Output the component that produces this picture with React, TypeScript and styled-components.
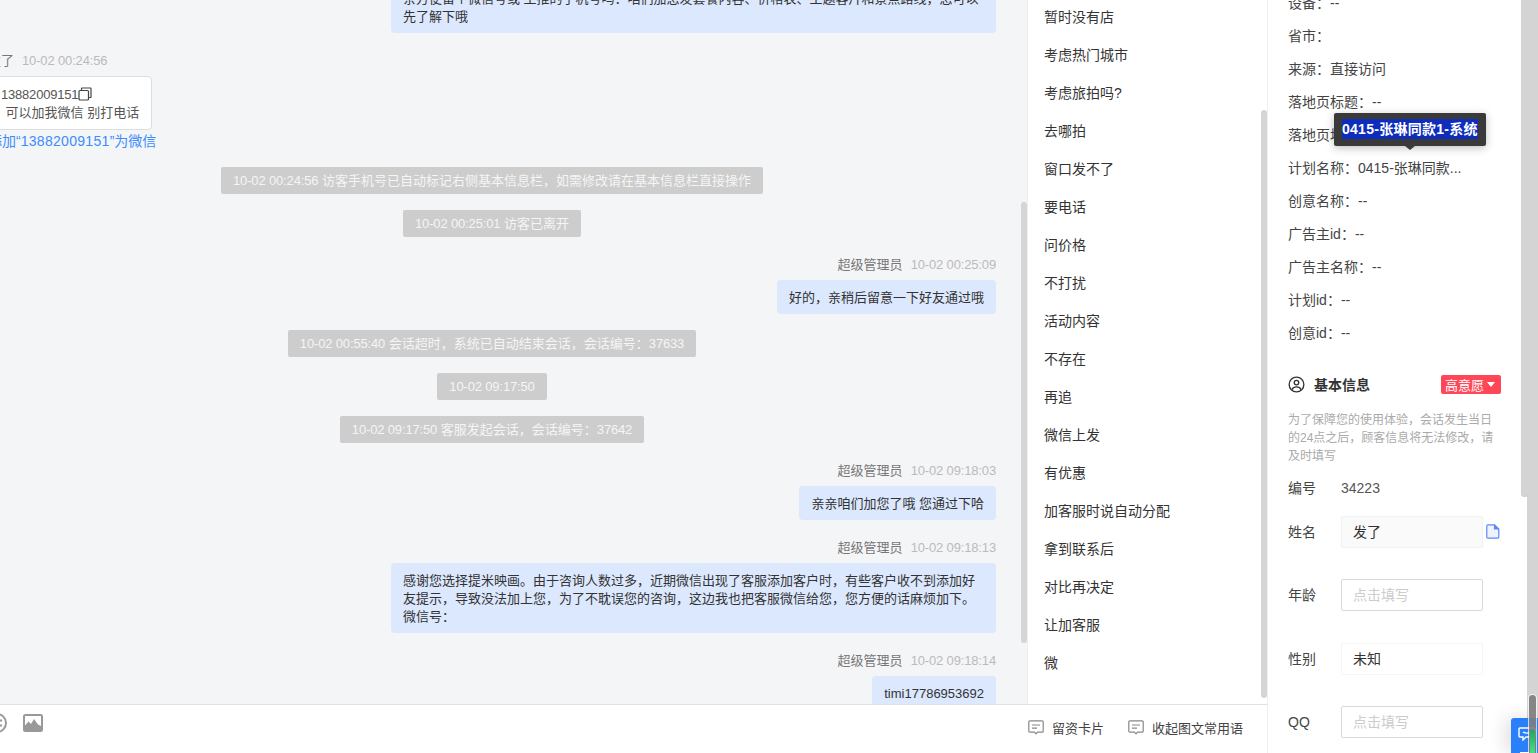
import styled, {createGlobalStyle} from 'styled-components'

const GlobalStyle = createGlobalStyle`
  html, body {
    margin: 0;
    height: 100%;
    overflow: hidden;
  }
  body {
    font-family: "Liberation Sans", "Noto Sans CJK SC", sans-serif;
    font-size: 13px;
    color: #333;
    background: #fff;
  }
`

const Page = styled.div`
  display: flex;
  width: 1538px;
  height: 753px;
  overflow: hidden;
  position: relative;
`

const Main = styled.div`
  width: 1268px;
  flex: none;
  display: flex;
  flex-direction: column;
`

const Workspace = styled.div`
  height: 704px;
  display: flex;
  flex: none;
`

const ChatPane = styled.div`
  position: relative;
  width: 1027px;
  flex: none;
  background: #f4f5f7;
  overflow: hidden;
`

const MessageList = styled.div`
  display: flex;
  flex-direction: column;
  align-items: flex-start;
  margin: -19px 0 0 -12px;
  padding-right: 31px;
  width: 1039px;
  box-sizing: border-box;
`

const Scrollbar = styled.div<{$top: number; $height: number}>`
  position: absolute;
  right: 0;
  top: ${p => p.$top}px;
  width: 6px;
  height: ${p => p.$height}px;
  border-radius: 3px;
  background: #d5d5d5;
`

const SenderRow = styled.div<{$left?: boolean}>`
  display: flex;
  gap: 8px;
  height: 16px;
  line-height: 16px;
  margin: 20px 0 7px;
  align-self: ${p => (p.$left ? 'flex-start' : 'flex-end')};
  color: #777;
`

const Time = styled.span`
  color: #bbb;
  letter-spacing: -0.15px;
`

const Bubble = styled.div`
  align-self: flex-end;
  max-width: 605px;
  box-sizing: border-box;
  padding: 9px 12px 7px;
  line-height: 18px;
  background: #dce8fe;
  border-radius: 4px;
  color: #333;
`

const VisitorBubble = styled.div`
  margin-left: 1px;
  padding: 9px 12px 7px;
  line-height: 18px;
  background: #fff;
  border: 1px solid #ddd;
  border-radius: 4px;
  color: #555;
  white-space: pre;
`

const Phone = styled.span`
  margin-left: -1px;
  letter-spacing: -0.2px;
`

const CopyGlyph = styled.svg`
  width: 14px;
  height: 14px;
  vertical-align: -2px;
`

const AddLink = styled.div`
  margin-top: 1px;
  line-height: 20px;
  font-size: 14px;
  color: #3c8cff;
`

const LinkDigits = styled.span`
  letter-spacing: 0.3px;
`

const SystemNote = styled.div`
  align-self: center;
  margin-top: 16px;
  height: 27px;
  line-height: 27px;
  padding: 0 12px;
  background: #cdcdcd;
  border-radius: 2px;
  color: #f5f5f5;
  white-space: nowrap;
`

const NoteDigits = styled.span`
  letter-spacing: -0.15px;
`

const PhrasePane = styled.div`
  position: relative;
  flex: 1;
  background: #fff;
  border-left: 1px solid #eee;
  border-right: 1px solid #eee;
  overflow: hidden;
`

const PhraseList = styled.ul`
  list-style: none;
  margin: -2px 0 0;
  padding: 0 0 0 16px;
`

const Phrase = styled.li`
  height: 38px;
  line-height: 38px;
  font-size: 14px;
  color: #333;
`

const Toolbar = styled.div`
  flex: 1;
  display: flex;
  align-items: center;
  background: #fff;
  border-top: 1px solid #e2e2e2;
  border-right: 1px solid #eee;
  padding: 0 24px 8px 0;
  overflow: hidden;
`

const ToolIcon = styled.svg<{$offset?: number}>`
  width: 20px;
  height: 20px;
  flex: none;
  margin-left: ${p => p.$offset ?? 0}px;
  margin-top: -4px;
`

const ToolLinks = styled.div`
  display: flex;
  gap: 24px;
  margin-left: auto;
  margin-top: 4px;
`

const ToolLink = styled.div`
  display: flex;
  align-items: center;
  gap: 8px;
  color: #444;
`

const CommentGlyph = styled.svg`
  width: 16px;
  height: 15px;
  flex: none;
`

const Panel = styled.div`
  width: 253px;
  flex: none;
  box-sizing: border-box;
  padding: 0 20px;
  background: #fff;
  overflow: hidden;
`

const InfoList = styled.div`
  margin-top: -13px;
`

const InfoRow = styled.div`
  height: 33px;
  line-height: 33px;
  font-size: 14px;
  color: #444;
  white-space: nowrap;
`

const SectionHead = styled.div`
  display: flex;
  align-items: center;
  height: 20px;
  margin-top: 24px;
  font-size: 14px;
`

const UserGlyph = styled.svg`
  width: 17px;
  height: 17px;
  margin-right: 9px;
`

const SectionTitle = styled.span`
  font-weight: 700;
  color: #333;
`

const Badge = styled.span`
  margin-left: auto;
  display: flex;
  align-items: center;
  gap: 3px;
  height: 19px;
  padding: 0 6px 0 4px;
  background: #ff4757;
  border-radius: 2px;
  font-size: 13px;
  color: #fff;
`

const Caret = styled.i`
  width: 0;
  height: 0;
  border-left: 4px solid transparent;
  border-right: 4px solid transparent;
  border-top: 5px solid #fff;
`

const Notice = styled.p`
  margin: 17px 0 0;
  font-size: 12px;
  line-height: 18px;
  color: #aaa;
`

const SerialRow = styled.div`
  display: flex;
  margin-top: 13px;
  line-height: 20px;
  font-size: 14px;
  color: #555;
`

const FieldLabel = styled.span`
  width: 53px;
  flex: none;
  line-height: 20px;
  font-size: 14px;
  color: #444;
`

const FieldStack = styled.div`
  display: flex;
  flex-direction: column;
  gap: 31.5px;
  margin-top: 17.6px;
`

const FieldRow = styled.div`
  display: flex;
  align-items: center;
  height: 32px;
`

const FieldValue = styled.div<{$muted?: boolean}>`
  width: 142px;
  height: 32px;
  box-sizing: border-box;
  line-height: 30px;
  padding: 0 11px;
  border: 1px solid ${p => (p.$muted ? '#f2f2f2' : '#f5f5f5')};
  border-radius: 2px;
  background: ${p => (p.$muted ? '#fafafa' : '#fff')};
  font-size: 14px;
  color: #333;
`

const FieldInput = styled.input`
  width: 142px;
  height: 32px;
  box-sizing: border-box;
  padding: 0 11px;
  border: 1px solid #d9d9d9;
  border-radius: 2px;
  font: inherit;
  font-size: 14px;
  outline: none;
  &::placeholder {
    color: #ccc;
  }
`

const FileGlyph = styled.svg`
  width: 14px;
  height: 15px;
  margin-left: 3px;
  flex: none;
`

const Rail = styled.div`
  position: relative;
  width: 17px;
  flex: none;
  &::before {
    content: '';
    position: absolute;
    left: 0;
    top: 0;
    width: 8px;
    height: 497px;
    background: #d4d4d4;
    border-radius: 0 0 3px 3px;
  }
  &::after {
    content: '';
    position: absolute;
    left: 6px;
    right: 0;
    top: 0;
    bottom: 0;
    background: #d4d4d4;
  }
`

const FloatButton = styled.div`
  position: absolute;
  right: 0;
  bottom: 0;
  width: 27px;
  height: 35px;
  background: #2a80fb;
  border-radius: 3px 0 0 0;
  box-shadow: -6px 0 18px rgba(0, 0, 0, 0.12);
  display: flex;
  justify-content: center;
  padding: 9px 0 0 4px;
  box-sizing: border-box;
  &::after {
    content: '';
    position: absolute;
    left: 9px;
    bottom: 0;
    width: 10px;
    height: 1px;
    background: #fff;
  }
`

const FloatGlyph = styled.svg`
  width: 18px;
  height: 14px;
`

const RailThumb = styled.div`
  position: absolute;
  right: 2px;
  bottom: 0;
  width: 7px;
  height: 58px;
  border-radius: 4px 4px 0 0;
  background: rgba(125, 125, 125, 0.9);
  box-shadow: 0 0 0 1px rgba(255, 255, 255, 0.7);
`

const RailGreen = styled.div`
  position: absolute;
  right: 3px;
  bottom: 0;
  width: 5px;
  height: 23px;
  border-radius: 3px 3px 0 0;
  background: linear-gradient(#1fa855, #4fdc7e);
`

const Tooltip = styled.div`
  position: absolute;
  left: 1334px;
  top: 113px;
  padding: 6px 8px;
  height: 33px;
  box-sizing: border-box;
  background: #3a3a3a;
  border-radius: 2px;
  box-shadow: 0 2px 8px rgba(0, 0, 0, 0.25);
  line-height: 20px;
  white-space: nowrap;
  &::after {
    content: '';
    position: absolute;
    left: 71px;
    bottom: -4px;
    border-left: 5px solid transparent;
    border-right: 5px solid transparent;
    border-top: 4px solid #3a3a3a;
  }
`

const Selected = styled.span`
  display: block;
  background: #0e2dbd;
  color: #fff;
  font-size: 14px;
  font-weight: 700;
  letter-spacing: 0.27px;
`

const phrases = [
  '暂时没有店',
  '考虑热门城市',
  '考虑旅拍吗?',
  '去哪拍',
  '窗口发不了',
  '要电话',
  '问价格',
  '不打扰',
  '活动内容',
  '不存在',
  '再追',
  '微信上发',
  '有优惠',
  '加客服时说自动分配',
  '拿到联系后',
  '对比再决定',
  '让加客服',
  '微',
]

const infoRows = [
  '设备：--',
  '省市：',
  '来源：直接访问',
  '落地页标题：--',
  '落地页地址：--',
  '计划名称：0415-张琳同款...',
  '创意名称：--',
  '广告主id：--',
  '广告主名称：--',
  '计划id：--',
  '创意id：--',
]

const CommentIcon = () => (
  <CommentGlyph viewBox='0 0 16 15' fill='none' stroke='#888' strokeWidth='1.2'>
    <path d='M1.800.8h12.400a1 1 0 0 1 1 1v9.400a1 1 0 0 1-1 1H9.500L8 13.800l-1.500-1.600H1.800a1 1 0 0 1-1-1V1.800a1 1 0 0 1 1-1z' />
    <path d='M4 5h8M4 8.200h5' />
  </CommentGlyph>
)

const Sender = ({name, time}: {name: string; time: string}) => (
  <SenderRow>
    <span>{name}</span>
    <Time>{time}</Time>
  </SenderRow>
)

const Note = ({time, text, code}: {time: string; text?: string; code?: string}) => (
  <SystemNote>
    <NoteDigits>{time}</NoteDigits>
    {text ? ` ${text}` : ''}
    {code ? <NoteDigits>{code}</NoteDigits> : null}
  </SystemNote>
)

const App = () => (
  <Page>
    <GlobalStyle />
    <Main>
      <Workspace>
        <ChatPane>
          <MessageList>
            <Bubble>
              亲方便留个微信号或 主推的手机号吗：咱们加您发套餐内容、价格表、主题客片和景点路线，您可以先了解下哦
            </Bubble>
            <SenderRow $left>
              <span>发了</span>
              <Time>10-02 00:24:56</Time>
            </SenderRow>
            <VisitorBubble>
              <Phone>13882009151</Phone>
              <CopyGlyph viewBox='0 0 14 14' fill='none' stroke='#444' strokeWidth='1.2'>
                <rect x='1' y='3.5' width='9.5' height='9.5' rx='1' />
                <path d='M3.500 3.500V1.600a.6.6 0 0 1 .6-.6h8.300a.6.6 0 0 1 .6.6v8.300a.6.6 0 0 1-.6.6h-1.900' />
              </CopyGlyph>
              {'\n\u00a0可以加我微信 别打电话'}
            </VisitorBubble>
            <AddLink>
              添加“<LinkDigits>13882009151</LinkDigits>”为微信
            </AddLink>
            <Note time='10-02 00:24:56' text='访客手机号已自动标记右侧基本信息栏，如需修改请在基本信息栏直接操作' />
            <Note time='10-02 00:25:01' text='访客已离开' />
            <Sender name='超级管理员' time='10-02 00:25:09' />
            <Bubble>好的，亲稍后留意一下好友通过哦</Bubble>
            <Note time='10-02 00:55:40' text='会话超时，系统已自动结束会话，会话编号：' code='37633' />
            <Note time='10-02 09:17:50' />
            <Note time='10-02 09:17:50' text='客服发起会话，会话编号：' code='37642' />
            <Sender name='超级管理员' time='10-02 09:18:03' />
            <Bubble>亲亲咱们加您了哦 您通过下哈</Bubble>
            <Sender name='超级管理员' time='10-02 09:18:13' />
            <Bubble>
              感谢您选择提米映画。由于咨询人数过多，近期微信出现了客服添加客户时，有些客户收不到添加好友提示，导致没法加上您，为了不耽误您的咨询，这边我也把客服微信给您，您方便的话麻烦加下。
              <br />
              微信号：
            </Bubble>
            <Sender name='超级管理员' time='10-02 09:18:14' />
            <Bubble>timi17786953692</Bubble>
          </MessageList>
          <Scrollbar $top={202} $height={441} />
        </ChatPane>
        <PhrasePane>
          <PhraseList>
            {phrases.map(text => (
              <Phrase key={text}>{text}</Phrase>
            ))}
          </PhraseList>
          <Scrollbar $top={110} $height={588} />
        </PhrasePane>
      </Workspace>
      <Toolbar>
        <ToolIcon $offset={-13} viewBox='0 0 20 20' fill='none' stroke='#999' strokeWidth='2'>
          <circle cx='10' cy='10' r='9' />
          <circle cx='14' cy='7.5' r='1.2' fill='#999' stroke='none' />
          <circle cx='14' cy='12.5' r='1.2' fill='#999' stroke='none' />
        </ToolIcon>
        <ToolIcon $offset={16} viewBox='0 0 20 18' fill='none'>
          <path
            fill='#999'
            fillRule='evenodd'
            d='M2.500 0h15A2.500 2.500 0 0 1 20 2.500v13a2.500 2.500 0 0 1-2.500 2.500h-15A2.500 2.500 0 0 1 0 15.500v-13A2.500 2.500 0 0 1 2.500 0zM2 2v9.500l3.500-4 2.500 2.500 3-5 4 5.500 3 1.500V2z'
          />
        </ToolIcon>
        <ToolLinks>
          <ToolLink>
            <CommentIcon />
            留资卡片
          </ToolLink>
          <ToolLink>
            <CommentIcon />
            收起图文常用语
          </ToolLink>
        </ToolLinks>
      </Toolbar>
    </Main>
    <Panel>
      <InfoList>
        {infoRows.map(text => (
          <InfoRow key={text}>{text}</InfoRow>
        ))}
      </InfoList>
      <SectionHead>
        <UserGlyph viewBox='0 0 18 18' fill='none' stroke='#333' strokeWidth='1.4'>
          <circle cx='9' cy='9' r='7.8' />
          <circle cx='9' cy='7' r='2.4' />
          <path d='M4.200 14.500c.8-2 2.600-3 4.800-3s4 1 4.800 3' />
        </UserGlyph>
        <SectionTitle>基本信息</SectionTitle>
        <Badge>
          高意愿
          <Caret />
        </Badge>
      </SectionHead>
      <Notice>为了保障您的使用体验，会话发生当日的24点之后，顾客信息将无法修改，请及时填写</Notice>
      <SerialRow>
        <FieldLabel>编号</FieldLabel>
        <span>34223</span>
      </SerialRow>
      <FieldStack>
        <FieldRow>
          <FieldLabel>姓名</FieldLabel>
          <FieldValue $muted>发了</FieldValue>
          <FileGlyph viewBox='0 0 14 15' fill='#eef3ff' stroke='#5f86fb' strokeWidth='1.2'>
            <path d='M2 .8h6.500L12.800 5v8a1.200 1.200 0 0 1-1.200 1.200H2A1.200 1.200 0 0 1 .8 13V2A1.200 1.200 0 0 1 2 .8z' />
            <path d='M8.500.8V5h4.300' fill='#5f86fb' />
          </FileGlyph>
        </FieldRow>
        <FieldRow>
          <FieldLabel>年龄</FieldLabel>
          <FieldInput placeholder='点击填写' readOnly />
        </FieldRow>
        <FieldRow>
          <FieldLabel>性别</FieldLabel>
          <FieldValue>未知</FieldValue>
        </FieldRow>
        <FieldRow>
          <FieldLabel>QQ</FieldLabel>
          <FieldInput placeholder='点击填写' readOnly />
        </FieldRow>
      </FieldStack>
    </Panel>
    <Rail />
    <FloatButton>
      <FloatGlyph viewBox='0 0 18 14' fill='none' stroke='#fff' strokeWidth='1.4'>
        <path d='M2 1h14a1 1 0 0 1 1 1v7a1 1 0 0 1-1 1H8l-3 3v-3H2a1 1 0 0 1-1-1V2a1 1 0 0 1 1-1z' />
        <path d='M5 5c2 1.500 6 1.500 8 0' />
      </FloatGlyph>
    </FloatButton>
    <RailThumb />
    <RailGreen />
    <Tooltip>
      <Selected>0415-张琳同款1-系统</Selected>
    </Tooltip>
  </Page>
)

export default App
